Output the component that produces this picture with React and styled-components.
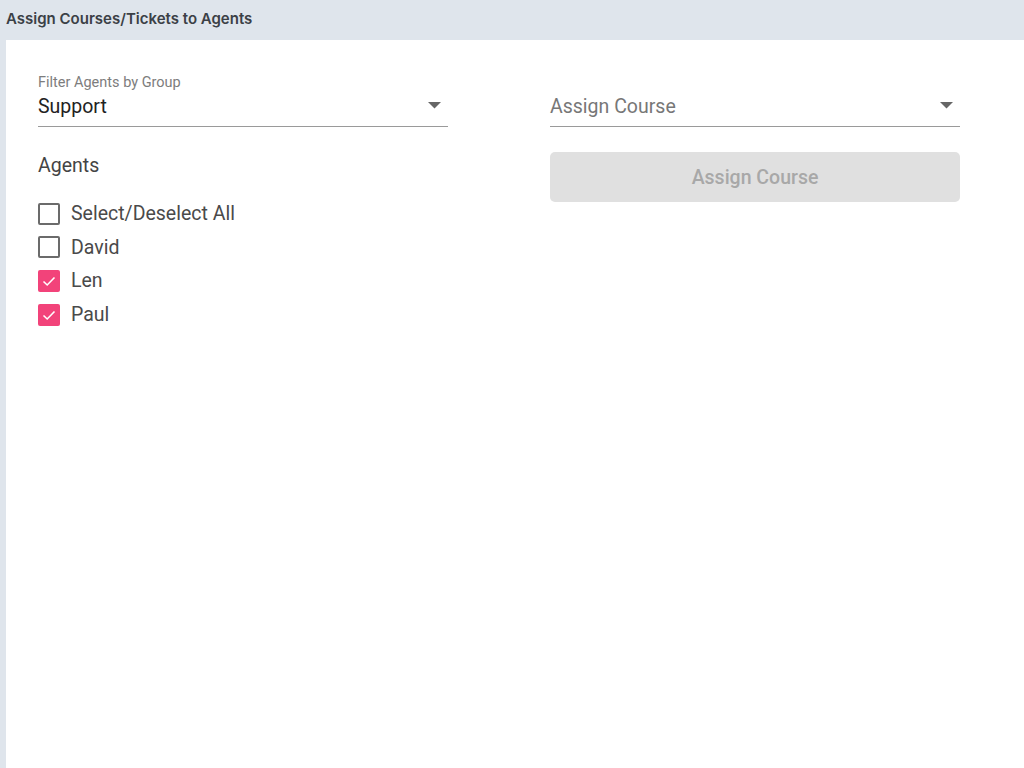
import React, { useState } from "react";
import styled, { createGlobalStyle } from "styled-components";

const GlobalStyle = createGlobalStyle`
  html, body {
    margin: 0;
    padding: 0;
    background: #dfe5ec;
    font-family: Roboto, "Liberation Sans", sans-serif;
  }
`;

const Page = styled.div`
  min-height: 768px;
  display: flex;
  flex-direction: column;
`;

const TopBar = styled.div`
  height: 40px;
  display: flex;
  align-items: center;
  padding-left: 6px;
  font-family: Inter, Roboto, sans-serif;
  font-size: 15px;
  font-weight: 600;
  color: #3b4046;
  padding-bottom: 3px;
  box-sizing: border-box;
`;

const Panel = styled.div`
  flex: 1;
  margin-left: 6px;
  background: #fff;
  padding: 27px 0 0 32px;
  display: grid;
  grid-template-columns: 410px 410px;
  column-gap: 102px;
  align-content: start;
`;

const Column = styled.div`
  display: flex;
  flex-direction: column;
`;

const SelectField = styled.div`
  position: relative;
  height: 60px;
  border-bottom: 1px solid #9a9a9a;
  display: flex;
  flex-direction: column;
  justify-content: flex-end;
  padding-bottom: 8px;
  box-sizing: border-box;
`;

const FieldLabel = styled.div`
  font-size: 14.5px;
  color: #7d7d7d;
  margin-bottom: 4px;
`;

const FieldValue = styled.div`
  font-size: 19.5px;
  color: ${(p) => (p.$placeholder ? "#777" : "#222")};
`;

const Caret = styled.svg`
  position: absolute;
  right: 7px;
  bottom: 17px;
`;

const SectionTitle = styled.div`
  font-size: 19.5px;
  color: #444;
  margin-top: 27px;
  margin-bottom: 20px;
`;

const CheckRow = styled.label`
  display: flex;
  align-items: center;
  height: 33.6px;
  gap: 11px;
  font-size: 19.5px;
  color: #4a4a4a;
  cursor: pointer;
`;

const Box = styled.span`
  width: 22px;
  height: 22px;
  box-sizing: border-box;
  border-radius: 2px;
  border: ${(p) => (p.$checked ? "none" : "2px solid #6b6b6b")};
  background: ${(p) => (p.$checked ? "#f2437a" : "transparent")};
  display: flex;
  align-items: center;
  justify-content: center;
`;

const Button = styled.button`
  margin-top: 25px;
  height: 50px;
  border: none;
  border-radius: 5px;
  background: #e0e0e0;
  color: #a8a8a8;
  font-family: inherit;
  font-size: 19.5px;
  font-weight: 500;
`;

const ArrowDown = () => (
  <Caret width="13" height="7" viewBox="0 0 13 7">
    <path d="M0 0 L13 0 L6.5 6.5 Z" fill="#666" />
  </Caret>
);

const App = () => {
  const [agents, setAgents] = useState({ David: false, Len: true, Paul: true });
  const all = Object.values(agents).every(Boolean);

  const toggle = (name) => setAgents({ ...agents, [name]: !agents[name] });
  const toggleAll = () => {
    const next = {};
    Object.keys(agents).forEach((k) => (next[k] = !all));
    setAgents(next);
  };

  const Check = ({ checked, label, onClick }) => (
    <CheckRow onClick={onClick}>
      <Box $checked={checked}>
        {checked && (
          <svg width="16" height="16" viewBox="0 0 16 16">
            <path d="M2.5 8.5 L6.2 12 L13.5 4.5" fill="none" stroke="#fff" strokeWidth="1.6" />
          </svg>
        )}
      </Box>
      {label}
    </CheckRow>
  );

  return (
    <Page>
      <GlobalStyle />
      <TopBar>Assign Courses/Tickets to Agents</TopBar>
      <Panel>
        <Column>
          <SelectField>
            <FieldLabel>Filter Agents by Group</FieldLabel>
            <FieldValue>Support</FieldValue>
            <ArrowDown />
          </SelectField>
          <SectionTitle>Agents</SectionTitle>
          <Check checked={false} label="Select/Deselect All" onClick={toggleAll} />
          {Object.keys(agents).map((name) => (
            <Check key={name} checked={agents[name]} label={name} onClick={() => toggle(name)} />
          ))}
        </Column>
        <Column>
          <SelectField>
            <FieldValue $placeholder>Assign Course</FieldValue>
            <ArrowDown />
          </SelectField>
          <Button disabled>Assign Course</Button>
        </Column>
      </Panel>
    </Page>
  );
};

export default App;
